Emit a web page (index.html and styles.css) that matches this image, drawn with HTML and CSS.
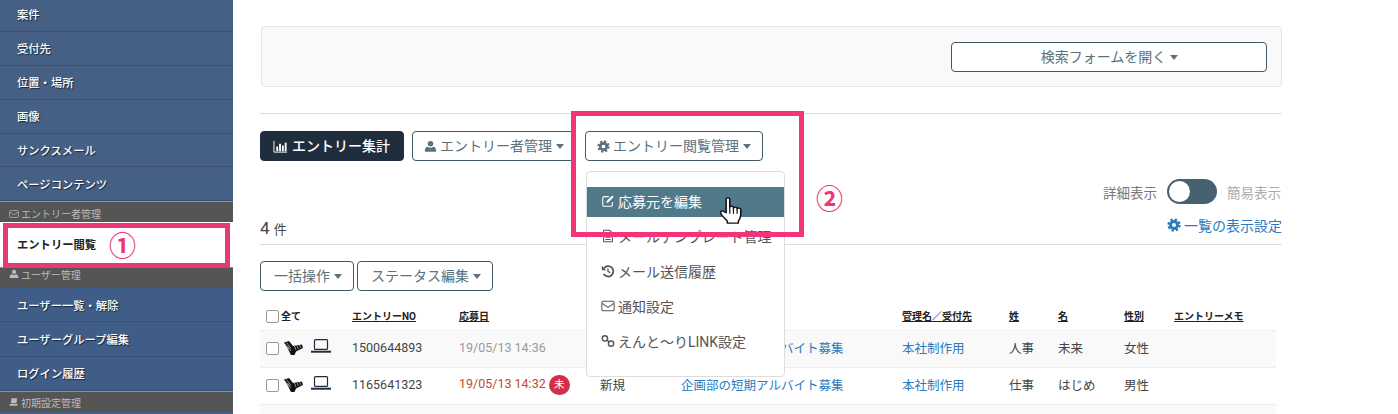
FILE: index.html
```html
<!DOCTYPE html>
<html lang="ja">
<head>
<meta charset="UTF-8" />
<title>エントリー閲覧</title>
<link rel="stylesheet" href="styles.css">
</head>
<body>
<svg class="defs" width="0" height="0">
  <symbol id="gear" viewBox="0 0 16 16">
    <circle cx="8" cy="8" r="4" fill="none" stroke="currentColor" stroke-width="3.4"/>
    <circle cx="8" cy="8" r="6.300" fill="none" stroke="currentColor" stroke-width="2.600" stroke-dasharray="2.600 2.350"/>
  </symbol>
  <symbol id="user" viewBox="0 0 16 16">
    <circle cx="8" cy="4.600" r="3.400" fill="currentColor"/>
    <path d="M2 14.500c-.6 0-1-.4-1-1 0-3 1.300-5.200 3.600-5.200 1 .8 2.100 1.200 3.400 1.200s2.400-.4 3.400-1.200c2.300 0 3.600 2.200 3.600 5.200 0 .6-.4 1-1 1z" fill="currentColor"/>
  </symbol>
  <symbol id="mail" viewBox="0 0 16 16">
    <rect x="1" y="2.500" width="14" height="11" rx="1.500" fill="none" stroke="currentColor" stroke-width="1.200"/>
    <path d="M1.500 5l6.500 4.500L14.500 5" fill="none" stroke="currentColor" stroke-width="1.200"/>
  </symbol>
  <symbol id="laptop" viewBox="0 0 20 14">
    <rect x="3.500" y=".6" width="13" height="9.800" rx="1" fill="none" stroke="currentColor" stroke-width="1.200"/>
    <path d="M0 12.700h20" stroke="currentColor" stroke-width="2"/>
  </symbol>
  <symbol id="bird" viewBox="0 0 19 15">
    <path d="M0 1.500L5 0l4 5 9-1.500L19 7l-7 3.500-1.500 3.500H7L4 8z" fill="#111"/>
    <path d="M2.500 1.500L7 7.500M1 3l4 5.500M3.500 5L7 10M10.500 5l1.500 4M13 4.500l1.500 3.500M15.500 4l1.500 3" stroke="#ccc" stroke-width=".7" fill="none"/>
  </symbol>
</svg>

<div class="page">
  <aside class="sidebar">
    <a class="side-item">案件</a>
    <a class="side-item">受付先</a>
    <a class="side-item">位置・場所</a>
    <a class="side-item">画像</a>
    <a class="side-item">サンクスメール</a>
    <a class="side-item">ページコンテンツ</a>
    <div class="side-head side-head-first"><svg class="side-icon"><use href="#mail"/></svg>エントリー者管理</div>
    <a class="side-item side-active">エントリー閲覧</a>
    <div class="side-head side-head-user"><svg class="side-icon"><use href="#user"/></svg>ユーザー管理</div>
    <a class="side-item side-blue">ユーザー一覧・解除</a>
    <a class="side-item side-blue">ユーザーグループ編集</a>
    <a class="side-item side-blue">ログイン履歴</a>
    <div class="side-head"><svg class="side-icon" viewBox="0 0 16 16"><path d="M4 2h9l-1 8H3zM1 11h13l-1 3H1z" fill="currentColor"/></svg>初期設定管理</div>
  </aside>

  <main class="content">
    <section class="search-panel">
      <button class="btn search-btn">検索フォームを開く<span class="caret"></span></button>
    </section>
    <hr class="rule">

    <div class="toolbar">
      <button class="btn btn-dark"><svg class="icon" viewBox="0 0 16 16"><path d="M1 2v12h14" fill="none" stroke="currentColor" stroke-width="1"/><path d="M3.500 8h2v5h-2zM6.500 5h2v8h-2zM9.500 7h2v6h-2zM12.500 4h2v9h-2z" fill="currentColor"/></svg>エントリー集計</button>
      <button class="btn"><svg class="icon"><use href="#user"/></svg>エントリー者管理<span class="caret"></span></button>
      <div class="dropdown">
        <button class="btn"><svg class="icon"><use href="#gear"/></svg>エントリー閲覧管理<span class="caret"></span></button>
        <ul class="menu">
          <li class="menu-item menu-on"><svg class="icon" viewBox="0 0 16 16"><path d="M13 9v3.500a1.500 1.500 0 0 1-1.500 1.500h-8A1.500 1.500 0 0 1 2 12.500v-8A1.500 1.500 0 0 1 3.500 3H9" fill="none" stroke="currentColor" stroke-width="1.200"/><path d="M6.500 8l6.300-6.300 1.700 1.700L8.200 9.700l-2.200.5z" fill="currentColor"/></svg>応募元を編集
            <svg class="hand" viewBox="1 0 18 29" preserveAspectRatio="none"><path d="M6 2.500c0-2 3-2 3 0V11c0-1.500 3-1.500 3 0v1c0-1.500 3-1.500 3 0v1c0-1.500 3-1.500 3 0v6c0 3-1 5-2 7v2H7v-2c-1-2-5-6-5.500-9-.3-2 1.700-2.500 2.500-1.500L6 17z" fill="#fff" stroke="#111" stroke-width="1.300" stroke-linejoin="round"/><path d="M9 11v7M12 12v6M15 13v5" stroke="#111" stroke-width="1"/></svg>
          </li>
          <li class="menu-item"><svg class="icon" viewBox="0 0 16 16"><path d="M3 1.500h7l3 3V14.500H3z" fill="none" stroke="currentColor" stroke-width="1.200"/><path d="M5 7h6M5 9.500h6M5 12h6" stroke="currentColor" stroke-width="1.200"/></svg>メールテンプレート管理</li>
          <li class="menu-item"><svg class="icon" viewBox="0 0 16 16"><path d="M3.500 4.500A6 6 0 1 1 3 11.500" fill="none" stroke="currentColor" stroke-width="2"/><path d="M1 2v5h5z" fill="currentColor"/><path d="M8 5v3.500l2.500 1.500" fill="none" stroke="currentColor" stroke-width="1.500"/></svg>メール送信履歴</li>
          <li class="menu-item"><svg class="icon"><use href="#mail"/></svg>通知設定</li>
          <li class="menu-item"><svg class="icon" viewBox="0 0 16 16"><circle cx="4.500" cy="5" r="3" fill="none" stroke="currentColor" stroke-width="1.600"/><circle cx="11.500" cy="11" r="3" fill="none" stroke="currentColor" stroke-width="1.600"/><path d="M6.500 7l3 2" stroke="currentColor" stroke-width="1.600"/></svg>えんと～りLINK設定</li>
        </ul>
      </div>
    </div>

    <div class="view-row">
      <span class="view-label">詳細表示</span>
      <span class="toggle"><span class="knob"></span></span>
      <span class="view-label view-off">簡易表示</span>
    </div>

    <div class="count-row">
      <div class="count"><b>4</b> 件</div>
      <a class="list-link"><svg class="icon"><use href="#gear"/></svg>一覧の表示設定</a>
    </div>

    <div class="bulk">
      <button class="btn">一括操作<span class="caret"></span></button>
      <button class="btn">ステータス編集<span class="caret"></span></button>
    </div>

    <table class="list">
      <colgroup>
        <col class="c1"><col class="c2"><col class="c3"><col class="c4"><col class="c5">
        <col class="c6"><col class="c7"><col class="c8"><col class="c9"><col class="c10">
      </colgroup>
      <thead>
        <tr>
          <th class="check-all"><span class="box"></span>全て</th>
          <th><u>エントリーNO</u></th>
          <th><u>応募日</u></th>
          <th><u>状態</u></th>
          <th><u>案件名</u></th>
          <th><u>管理名／受付先</u></th>
          <th><u>姓</u></th>
          <th><u>名</u></th>
          <th><u>性別</u></th>
          <th><u>エントリーメモ</u></th>
        </tr>
      </thead>
      <tbody>
        <tr class="odd">
          <td class="marks"><span class="box"></span><svg class="bird"><use href="#bird"/></svg><svg class="laptop"><use href="#laptop"/></svg></td>
          <td>1500644893</td>
          <td class="date-read">19/05/13 14:36</td>
          <td>新規</td>
          <td><a>企画部の短期アルバイト募集</a></td>
          <td><a>本社制作用</a></td>
          <td>人事</td>
          <td>未来</td>
          <td>女性</td>
          <td></td>
        </tr>
        <tr>
          <td class="marks"><span class="box"></span><svg class="bird"><use href="#bird"/></svg><svg class="laptop"><use href="#laptop"/></svg></td>
          <td>1165641323</td>
          <td class="date-new">19/05/13 14:32<span class="badge">未</span></td>
          <td>新規</td>
          <td><a>企画部の短期アルバイト募集</a></td>
          <td><a>本社制作用</a></td>
          <td>仕事</td>
          <td>はじめ</td>
          <td>男性</td>
          <td></td>
        </tr>
        <tr class="odd">
          <td colspan="10"></td>
        </tr>
      </tbody>
    </table>
  </main>
</div>

<!-- annotations drawn on top of the screenshot -->
<div class="mark mark-one"></div>
<div class="mark mark-two"></div>
<span class="num num-one">①</span>
<span class="num num-two">②</span>
</body>
</html>
```

FILE: styles.css
```css
* {
  box-sizing: border-box;
}
html, body {
  height: 100%;
}
body {
  margin: 0;
  overflow: hidden;
  position: relative;
  background: #fff;
  font-family: Roboto, "Noto Sans CJK JP", sans-serif;
  font-size: 14px;
  color: #333;
}
.defs {
  position: absolute;
}
.page {
  display: flex;
  height: 414px;
  overflow: hidden;
}

/* sidebar */
.sidebar {
  width: 233px;
  flex: none;
  margin-top: -2px;
  background: #456084;
}
.side-item {
  display: flex;
  align-items: center;
  height: 33.9px;
  padding-left: 17px;
  border-bottom: 1px solid #3a5270;
  color: #fff;
  font-size: 11.3px;
  font-weight: 500;
  text-shadow: 1px 1px 1px rgba(0,0,0,0.6);
}
.side-blue {
  height: 34.4px;
  background: #3f5d86;
}
.side-active {
  height: 45px;
  background: #fff;
  color: #222;
  font-weight: 700;
  text-shadow: none;
  border: 0;
}
.side-head {
  display: flex;
  align-items: center;
  height: 21px;
  padding-left: 9px;
  background: #555;
  border-top: 1px solid #8a8f94;
  color: #bbb;
  font-size: 10px;
}
.side-head-first {
  height: 20.6px;
  padding-top: 3px;
}
.side-head-user {
  padding-bottom: 7px;
}
.side-icon {
  width: 10px;
  height: 10px;
  margin-right: 2px;
}

/* main column */
.content {
  flex: 1;
  padding: 26px 116px 0 27px;
}
.search-panel {
  display: flex;
  justify-content: flex-end;
  height: 61px;
  margin-left: 1px;
  padding: 15px 14px 0 0;
  background: #f9f9f9;
  border: 1px solid #e5e5e5;
  border-radius: 4px;
}
.btn {
  display: inline-flex;
  align-items: center;
  justify-content: center;
  height: 30px;
  padding: 0 10px 2px 11px;
  background: #fff;
  border: 1px solid #3f5a64;
  border-radius: 4px;
  color: #5b727c;
  font-family: inherit;
  font-size: 14px;
  white-space: nowrap;
}
.search-btn {
  width: 316px;
}
.btn-dark {
  background: #1f2d3d;
  border-color: #1f2d3d;
  color: #fff;
  font-weight: 500;
  padding: 0 13px 2px 12px;
}
.caret {
  width: 0;
  height: 0;
  margin: 2px 0 0 4px;
  border-left: 4.500px solid transparent;
  border-right: 4.500px solid transparent;
  border-top: 5px solid currentColor;
}
.icon {
  width: 14px;
  height: 14px;
  margin-right: 3px;
  flex: none;
}
.toolbar .btn > .icon {
  width: 13px;
  height: 13px;
  margin-top: 2px;
}
.toolbar .btn-dark > .icon {
  width: 15px;
  height: 15px;
  margin-right: 4px;
}
.rule {
  height: 1px;
  margin: 26px 0 0;
  border: 0;
  background: #ddd;
}
.toolbar {
  display: flex;
  gap: 8px;
  margin-top: 17px;
}

/* dropdown */
.dropdown {
  position: relative;
  margin-left: 2px;
}
.dropdown > .btn {
  padding-right: 11px;
}
.menu {
  position: absolute;
  top: 40px;
  left: 1px;
  z-index: 2;
  width: 199px;
  height: 206px;
  margin: 0;
  padding: 15px 0 0;
  list-style: none;
  background: #fff;
  border: 1px solid #ddd;
  border-radius: 4px;
}
.menu-item {
  position: relative;
  display: flex;
  align-items: center;
  height: 30px;
  margin-bottom: 5px;
  padding: 0 0 2px 14px;
  color: #555;
  white-space: nowrap;
}
.menu-on {
  background: #507a8a;
  color: #fff;
}
.hand {
  position: absolute;
  left: 133px;
  top: 10px;
  width: 22px;
  height: 27px;
}

/* view toggle */
.view-row {
  display: flex;
  justify-content: flex-end;
  align-items: center;
  gap: 10px;
  height: 25px;
  margin-top: 18px;
  padding-right: 1px;
  font-size: 13.500px;
  color: #777;
}
.view-off {
  color: #aaa;
}
.toggle {
  display: block;
  width: 50px;
  height: 25px;
  padding: 2px 0 0 2px;
  background: #466270;
  border-radius: 13px;
}
.knob {
  display: block;
  width: 21px;
  height: 21px;
  background: #fff;
  border-radius: 50%;
}

/* count */
.count-row {
  display: flex;
  justify-content: space-between;
  align-items: flex-end;
  height: 41px;
  padding-bottom: 6px;
  border-bottom: 1px solid #ddd;
}
.count {
  color: #444;
  font-size: 13px;
}
.count b {
  margin-right: 1px;
  font-size: 17px;
  font-weight: 400;
}
.list-link {
  display: flex;
  align-items: center;
  margin-bottom: 3px;
  color: #2a7ac0;
}
.bulk {
  display: flex;
  gap: 3px;
  margin-top: 16px;
}
.bulk .btn {
  padding-left: 13px;
  padding-right: 11px;
}

/* table */
.list {
  table-layout: fixed;
  width: 1016px;
  margin-top: 16px;
  border-collapse: collapse;
  font-size: 12.500px;
  color: #444;
}
.c1 { width: 86px; }
.c2 { width: 107px; }
.c3 { width: 141px; }
.c4 { width: 81px; }
.c5 { width: 221px; }
.c6 { width: 107px; }
.c7 { width: 49px; }
.c8 { width: 66px; }
.c9 { width: 50px; }
.c10 { width: 108px; }
.list th {
  height: 23px;
  padding: 0 0 6px 6px;
  font-size: 10px;
  font-weight: 700;
  color: #222;
  text-align: left;
  white-space: nowrap;
}
.list td {
  height: 37px;
  padding: 0 0 2px 6px;
  border-top: 1px solid #eee;
  white-space: nowrap;
}
.list a {
  color: #2a7ac0;
}
.odd {
  background: #f9f9f9;
}
.box {
  display: inline-block;
  width: 13px;
  height: 13px;
  margin-right: 2px;
  background: #fff;
  border: 1px solid #999;
  border-radius: 2px;
  vertical-align: -3px;
}
.bird {
  width: 19px;
  height: 15px;
  margin-left: 3px;
  vertical-align: -4px;
}
.laptop {
  width: 20px;
  height: 14px;
  margin-left: 8px;
  vertical-align: -1px;
  color: #1f2d3d;
}
.date-read {
  color: #999;
}
.date-new {
  color: #c5482e;
}
.badge {
  display: inline-block;
  width: 21px;
  height: 20px;
  margin-left: 3px;
  background: #d0304a;
  border-radius: 10px;
  color: #fff;
  font-size: 10.500px;
  line-height: 20px;
  text-align: center;
}

/* pink annotations */
.mark {
  position: absolute;
  z-index: 3;
  border: 5px solid #f0357a;
}
.mark-one {
  left: 3px;
  top: 223px;
  width: 227px;
  height: 45px;
  border-color: #e63a78;
}
.mark-two {
  left: 571px;
  top: 111px;
  width: 233px;
  height: 126px;
}
.num {
  position: absolute;
  z-index: 3;
  color: #f0357a;
  font-size: 27px;
  line-height: 28px;
  font-weight: 700;
}
.num-one {
  left: 109px;
  top: 233px;
}
.num-two {
  left: 816px;
  top: 186px;
}
```
